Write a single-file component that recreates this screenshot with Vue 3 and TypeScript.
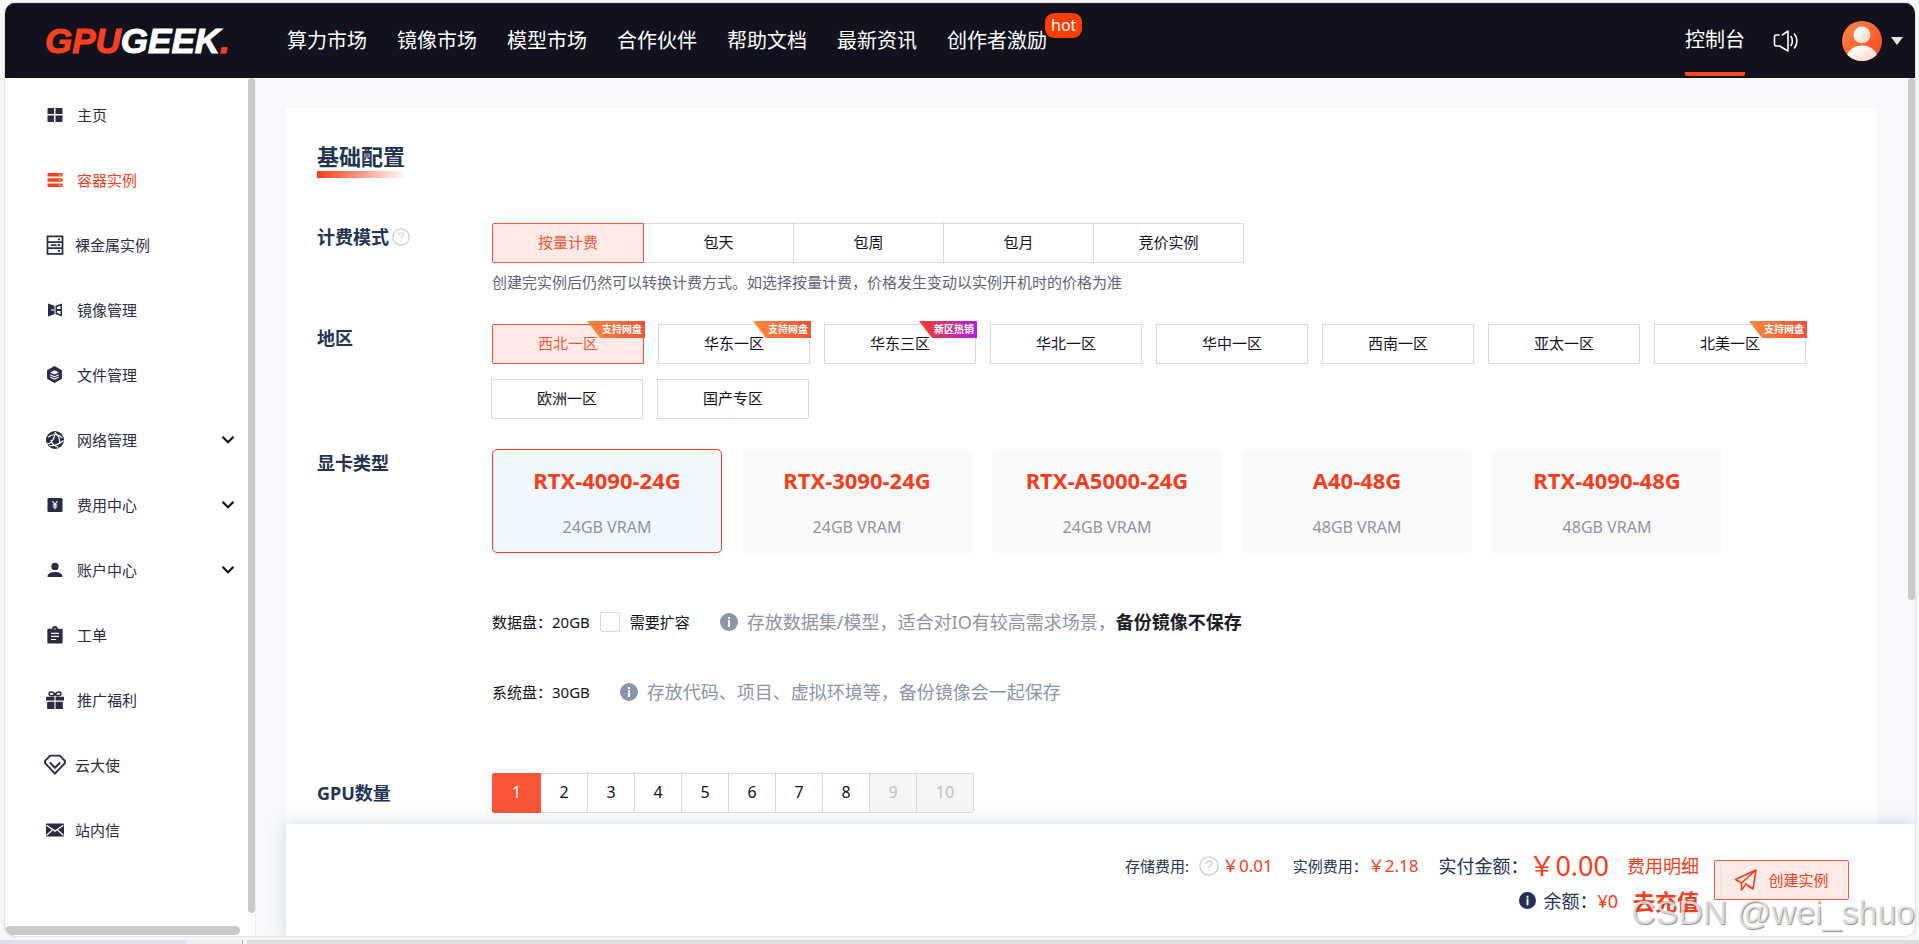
<script setup lang="ts">
import { computed, ref } from 'vue'

interface Shape {
  d: string
  kind?: 'outline' | 'cut' | 'cutline'
}
interface MenuItem {
  label: string
  icon: string
  size: number
  compact?: boolean
  expandable?: boolean
}
interface Region {
  name: string
  tag?: string
  hot?: boolean
}

const navItems = ['算力市场', '镜像市场', '模型市场', '合作伙伴', '帮助文档', '最新资讯']

const menu: MenuItem[] = [
  { label: '主页', icon: 'home', size: 16 },
  { label: '容器实例', icon: 'container', size: 16 },
  { label: '裸金属实例', icon: 'metal', size: 20, compact: true },
  { label: '镜像管理', icon: 'mirror', size: 16 },
  { label: '文件管理', icon: 'files', size: 17 },
  { label: '网络管理', icon: 'network', size: 18, expandable: true },
  { label: '费用中心', icon: 'cost', size: 16, expandable: true },
  { label: '账户中心', icon: 'account', size: 16, expandable: true },
  { label: '工单', icon: 'ticket', size: 18 },
  { label: '推广福利', icon: 'gift', size: 18 },
  { label: '云大使', icon: 'diamond', size: 22, compact: true },
  { label: '站内信', icon: 'mail', size: 18, compact: true },
]

const icons: Record<string, Shape[]> = {
  home: [
    { d: 'M1.5 1H7v6H.5V2a1 1 0 0 1 1-1zM8.5 1h6a1 1 0 0 1 1 1v5h-7zM.5 8.5H7V15H1.5a1 1 0 0 1-1-1zM8.5 8.5h7V14a1 1 0 0 1-1 1h-6z' },
  ],
  container: [
    { d: 'M.5 1h15v3.5H.5zM.5 6.2h15v3.6H.5zM.5 11.5h15V15H.5z' },
    { d: 'M12 3h1.5M12 8h1.5M12 13.2h1.5', kind: 'cutline' },
  ],
  metal: [
    { d: 'M2 1h12v14H2zM2 5.6h12M2 10.4h12M4.8 8h4.5', kind: 'outline' },
    { d: 'M10.3 7.2h1.7v1.600h-1.7zM10.3 2.7h1.7v1.4h-1.7zM10.3 12h1.7v1.4h-1.7z' },
  ],
  mirror: [
    { d: 'M1 1.500l6.500 2.300v8.400L1 14.500zM8.500 3.800L15 1.500v13l-6.500-2.300z' },
    { d: 'M10 7V4.900l3.500-1.200V7zM10 9v2.100l3.500 1.200V9z', kind: 'cut' },
    { d: 'M4 8h3.500', kind: 'cutline' },
  ],
  files: [
    { d: 'M8 0l7 4v8l-7 4-7-4V4z' },
    { d: 'M8 4l4 2-4 2-4-2z', kind: 'cut' },
    { d: 'M4 8.300l4 2 4-2M4 10.400l4 2 4-2', kind: 'cutline' },
  ],
  network: [
    { d: 'M8 0a8 8 0 1 1 0 16A8 8 0 0 1 8 0z' },
    { d: 'M0 11.500c4 .3 7-3 8.500-10.500M8.500 2c2.500 2 4 5.500 3.500 9.500M2 5.500C6 2 11 2.500 14.500 6M3 13c4.500.5 9-1.500 12.500-4.500M4.500 8c.5 3.500 3 5.500 6.500 6.500', kind: 'cutline' },
  ],
  cost: [
    { d: 'M1.500 1h13a1 1 0 0 1 1 1v12a1 1 0 0 1-1 1h-13a1 1 0 0 1-1-1V2a1 1 0 0 1 1-1z' },
    { d: 'M5.500 4L8 7.500 10.500 4M8 7.500V12.300M5.700 8h4.600M5.700 10h4.600', kind: 'cutline' },
  ],
  account: [
    { d: 'M8 .8a3.700 3.700 0 1 1 0 7.400A3.700 3.700 0 0 1 8 .8zM.5 15c0-3.500 3-5 7.500-5s7.500 1.500 7.500 5z' },
  ],
  ticket: [
    { d: 'M2 2.500h3.500a2.500 2.500 0 0 1 5 0H14a.8.8 0 0 1 .8.8v11.400a.8.8 0 0 1-.8.8H2a.8.8 0 0 1-.8-.8V3.300a.8.8 0 0 1 .8-.8z' },
    { d: 'M4.500 6.500h7M4.500 9.300h7M4.500 12h4.500M7.500 2.500h1', kind: 'cutline' },
  ],
  gift: [
    { d: 'M0 5h7.500v3.500H0zM8.500 5H16v3.500H8.500zM1 9.500h6.500V16H1zM8.500 9.500H15V16H8.500z' },
    { d: 'M8 3C6.500 4.500 2.500 4.800 2.700 2.300 3 0 6.500.5 8 3c1.500-2.500 5-3 5.300-.7C13.500 4.800 9.500 4.500 8 3z', kind: 'outline' },
  ],
  diamond: [
    { d: 'M4.500 1.200h7L15.200 5v1.700L8 14.300.8 6.700V5zM4.300 6.200L8 10l3.700-3.800', kind: 'outline' },
  ],
  mail: [
    { d: 'M1 2.200h14a1 1 0 0 1 1 1v9.600a1 1 0 0 1-1 1H1a1 1 0 0 1-1-1V3.200a1 1 0 0 1 1-1z' },
    { d: 'M.5 3.800L8 9l7.500-5.200M.5 12.700l5-4.500M15.500 12.700l-5-4.500', kind: 'cutline' },
  ],
}

const billingModes = ['按量计费', '包天', '包周', '包月', '竞价实例']
const regions: Region[] = [
  { name: '西北一区', tag: '支持网盘' },
  { name: '华东一区', tag: '支持网盘' },
  { name: '华东三区', tag: '新区热销', hot: true },
  { name: '华北一区' },
  { name: '华中一区' },
  { name: '西南一区' },
  { name: '亚太一区' },
  { name: '北美一区', tag: '支持网盘' },
  { name: '欧洲一区' },
  { name: '国产专区' },
]
const cards = [
  { model: 'RTX-4090-24G', vram: 24 },
  { model: 'RTX-3090-24G', vram: 24 },
  { model: 'RTX-A5000-24G', vram: 24 },
  { model: 'A40-48G', vram: 48 },
  { model: 'RTX-4090-48G', vram: 48 },
]
const maxGpus = 8

const activeMenu = ref('容器实例')
const billing = ref('按量计费')
const region = ref('西北一区')
const card = ref('RTX-4090-24G')
const gpuCount = ref(1)
const expandDisk = ref(false)

const storageFee = 0.01
const instanceRate = 2.18
const instanceFee = computed(() => (instanceRate * gpuCount.value).toFixed(2))
</script>

<template>
  <div class="screen" lang="zh-CN">
    <div class="window">
      <header class="topbar">
        <a class="logo" href="#"><span class="logo-a">GPU</span>GEEK<span class="logo-a">.</span></a>
        <nav class="nav">
          <a v-for="n in navItems" :key="n" href="#">{{ n }}</a>
          <a class="with-badge" href="#">创作者激励<span class="hot">hot</span></a>
        </nav>
        <a class="console" href="#">控制台</a>
        <button class="icon-btn sound" type="button" aria-label="公告">
          <svg width="26" height="24" viewBox="0 0 26 24" fill="none" stroke="#fff" stroke-width="1.600" stroke-linejoin="round" stroke-linecap="round">
            <path d="M6 6H3a1.500 1.500 0 0 0-1.500 1.500v8A1.500 1.500 0 0 0 3 17h3.500l8.500 5V2L9.500 5.800" />
            <path d="M18 7.500c1.800 2.500 1.800 6.500 0 9M21.500 5c3.200 4 3.200 10 0 14" />
          </svg>
        </button>
        <button class="icon-btn user" type="button" aria-label="用户">
          <svg width="40" height="40" viewBox="0 0 40 40">
            <defs>
              <linearGradient id="av-bg" x1="0" y1="0" x2="1" y2="1"><stop offset="0" stop-color="#ff8a45" /><stop offset="1" stop-color="#f94420" /></linearGradient>
              <linearGradient id="av-body" x1="0" y1="0" x2="1" y2="1"><stop offset=".2" stop-color="#fff" /><stop offset="1" stop-color="#fbcdb8" /></linearGradient>
              <clipPath id="av-clip"><circle cx="20" cy="20" r="20" /></clipPath>
            </defs>
            <circle cx="20" cy="20" r="20" fill="url(#av-bg)" />
            <g clip-path="url(#av-clip)" fill="url(#av-body)">
              <circle cx="20" cy="14" r="8.500" />
              <path d="M4 38c1-9 8-13.500 16-13.500S35 29 36 38v4H4z" />
            </g>
          </svg>
          <svg width="12" height="8" viewBox="0 0 12 8"><path d="M0 0h12L6 8z" fill="#e4e4e4" /></svg>
        </button>
      </header>

      <div class="body">
        <aside class="sidebar">
          <div class="side-main">
            <nav class="menu">
              <a
                v-for="m in menu"
                :key="m.label"
                href="#"
                :class="{ active: m.label === activeMenu, compact: m.compact }"
                @click.prevent="activeMenu = m.label"
              >
                <span class="slot">
                  <svg :width="m.size" :height="m.size" viewBox="0 0 16 16">
                    <path v-for="(s, i) in icons[m.icon]" :key="i" :d="s.d" :class="s.kind ?? 'solid'" />
                  </svg>
                </span>
                <span class="menu-label">{{ m.label }}</span>
                <svg v-if="m.expandable" class="chev" width="14" height="10" viewBox="0 0 14 10">
                  <path d="M1.500 1.800L7 7.300l5.500-5.500" fill="none" stroke="#12121e" stroke-width="2.200" />
                </svg>
              </a>
            </nav>
            <div class="track-v"><div class="thumb side-thumb"></div></div>
          </div>
          <div class="track-h"><div class="thumb"></div></div>
        </aside>

        <main class="main">
          <div class="scroll">
            <section class="panel">
              <h2 class="title">基础配置</h2>

              <div class="row">
                <div class="label">
                  计费模式
                  <svg class="help" width="18" height="18" viewBox="0 0 18 18"><circle cx="9" cy="9" r="8.200" /><path d="M6.600 7.200c0-3.200 4.900-3.200 4.900-.3 0 1.700-2.500 1.800-2.500 3.700M9 12.200v1.400" /></svg>
                </div>
                <div>
                  <div class="segments billing">
                    <button v-for="b in billingModes" :key="b" type="button" :class="{ on: b === billing }" @click="billing = b">{{ b }}</button>
                  </div>
                  <p class="hint">创建完实例后仍然可以转换计费方式。如选择按量计费，价格发生变动以实例开机时的价格为准</p>
                </div>
              </div>

              <div class="row">
                <div class="label">地区</div>
                <div class="segments regions">
                  <button v-for="r in regions" :key="r.name" type="button" :class="{ on: r.name === region }" @click="region = r.name">
                    {{ r.name }}
                    <span v-if="r.tag" class="tag" :class="{ hotsale: r.hot }">{{ r.tag }}</span>
                  </button>
                </div>
              </div>

              <div class="row">
                <div class="label">显卡类型</div>
                <div>
                  <div class="cards">
                    <button v-for="c in cards" :key="c.model" type="button" class="card" :class="{ on: c.model === card }" @click="card = c.model">
                      <strong>{{ c.model }}</strong>
                      <span>{{ c.vram }}GB VRAM</span>
                    </button>
                  </div>
                  <div class="disk data-disk">
                    <span>数据盘：20GB</span>
                    <label class="check"><input v-model="expandDisk" type="checkbox" />需要扩容</label>
                    <svg class="info" width="18" height="18" viewBox="0 0 18 18"><circle cx="9" cy="9" r="9" /><path d="M8 7h2v7H8zM8 4h2v2H8z" fill="#fff" /></svg>
                    <span class="note">存放数据集/模型，适合对IO有较高需求场景，<b>备份镜像不保存</b></span>
                  </div>
                  <div class="disk sys-disk">
                    <span>系统盘：30GB</span>
                    <svg class="info" width="18" height="18" viewBox="0 0 18 18"><circle cx="9" cy="9" r="9" /><path d="M8 7h2v7H8zM8 4h2v2H8z" fill="#fff" /></svg>
                    <span class="note">存放代码、项目、虚拟环境等，备份镜像会一起保存</span>
                  </div>
                </div>
              </div>

              <div class="row counts">
                <div class="label">GPU数量</div>
                <div class="segments count">
                  <button v-for="n in 10" :key="n" type="button" :disabled="n > maxGpus" :class="{ on: n === gpuCount }" @click="gpuCount = n">{{ n }}</button>
                </div>
              </div>
            </section>
            <div class="track-v"><div class="thumb main-thumb"></div></div>
          </div>

          <footer class="checkout">
            <div class="sums">
              <div class="sum-row">
                <span class="fee">存储费用:<svg class="help" width="20" height="20" viewBox="0 0 18 18"><circle cx="9" cy="9" r="8.200" /><path d="M6.600 7.200c0-3.200 4.900-3.200 4.900-.3 0 1.700-2.500 1.800-2.500 3.700M9 12.200v1.400" /></svg><em>￥{{ storageFee }}</em></span>
                <span class="fee">实例费用：<em>￥{{ instanceFee }}</em></span>
                <span class="pay">实付金额：<em>￥0.00</em></span>
                <a href="#" class="detail">费用明细</a>
              </div>
              <div class="sum-row">
                <svg class="info dark" width="17" height="17" viewBox="0 0 18 18"><circle cx="9" cy="9" r="9" /><path d="M8 7h2v7H8zM8 4h2v2H8z" fill="#fff" /></svg>
                <span class="pay">余额：<em>¥0</em></span>
                <a href="#" class="recharge">去充值</a>
              </div>
            </div>
            <button type="button" class="create">
              <svg width="24" height="24" viewBox="0 0 24 24" fill="none" stroke="#fa3c1b" stroke-width="1.600" stroke-linejoin="round"><path d="M22 2L1.500 11.500l6 3.500zM22 2L7.500 15v7l3.700-4.500M22 2l-3 19-8-5.500" /></svg>
              创建实例
            </button>
          </footer>
        </main>
      </div>
    </div>
    <div class="taskbar"><i class="seg-a"></i><i class="seg-b"></i><i class="seg-c"></i></div>
    <div class="watermark">CSDN @wei_shuo</div>
  </div>
</template>

<style>
html,
body {
  margin: 0;
  background: #f7f7f7;
}
</style>

<style scoped>
* {
  box-sizing: border-box;
}
.screen {
  position: relative;
  display: flex;
  flex-direction: column;
  height: 100vh;
  padding: 3px 4px 0 5px;
  overflow: hidden;
  background: #f7f7f7;
  color: #12121e;
  font: 15px/20px 'Noto Sans', 'Noto Sans CJK SC', sans-serif;
}
a {
  color: inherit;
  text-decoration: none;
}
button {
  font: inherit;
  color: inherit;
  cursor: pointer;
}
em {
  font-style: normal;
  color: #fa3c1b;
}
.window {
  flex: 1;
  min-height: 0;
  display: flex;
  flex-direction: column;
  border-radius: 10px;
  overflow: hidden;
  background: #fff;
  box-shadow: 0 0 2px #aaa;
}
.topbar {
  display: flex;
  align-items: center;
  height: 75px;
  flex: none;
  padding: 0 12px 0 40px;
  background: #12121e;
  border-top: 1px solid #2c2c36;
  color: #fff;
  font-size: 20px;
  line-height: 30px;
}
.logo {
  width: 242px;
  font: italic bold 35px/40px 'Liberation Sans', sans-serif;
  -webkit-text-stroke: 1px currentColor;
}
.logo-a {
  color: #fa4020;
}
.nav {
  flex: 1;
  display: flex;
  gap: 30px;
}
.with-badge {
  position: relative;
}
.hot {
  position: absolute;
  left: 100%;
  top: -13px;
  margin-left: -2px;
  padding: 0 6px;
  border-radius: 9px;
  background: #ff3d00;
  font-size: 16px;
  line-height: 25px;
}
.console {
  align-self: stretch;
  display: flex;
  align-items: center;
  padding-top: 4px;
  border-bottom: 4px solid #fb4a26;
  border-radius: 2px;
  margin-bottom: 2px;
}
.icon-btn {
  display: flex;
  align-items: center;
  gap: 9px;
  padding: 0;
  border: 0;
  background: none;
}
.sound {
  margin-left: 28px;
}
.user {
  margin-left: 43px;
}

.body {
  flex: 1;
  min-height: 0;
  display: flex;
}
.sidebar {
  display: flex;
  flex-direction: column;
  width: 251px;
  flex: none;
  border-right: 1px solid #eceef4;
}
.side-main {
  flex: 1;
  min-height: 0;
  display: flex;
}
.menu {
  flex: 1;
  padding-top: 4px;
  color: #2b2b45;
}
.menu a {
  display: flex;
  align-items: center;
  height: 65px;
  padding: 0 13px 0 38px;
}
.menu a.active {
  color: #fa4020;
}
.slot {
  display: flex;
  justify-content: center;
  width: 23px;
  margin-right: 11px;
}
.compact .slot {
  margin-right: 9px;
}
.menu-label {
  flex: 1;
}
.solid {
  fill: currentColor;
}
.outline,
.cutline {
  fill: none;
  stroke: currentColor;
  stroke-width: 1.4;
}
.cutline {
  stroke: #fff;
  stroke-width: 1.1;
}
.cut {
  fill: #fff;
}
.track-v {
  width: 7px;
  flex: none;
}
.thumb {
  border-radius: 5px;
  background: #cacaca;
}
.side-thumb {
  height: calc(100% - 7px);
}
.track-h {
  height: 10px;
  margin-top: 6px;
}
.track-h .thumb {
  width: 94%;
  height: 9px;
}

.main {
  flex: 1;
  min-width: 0;
  display: flex;
  flex-direction: column;
  background: #f8f9fd;
}
.scroll {
  flex: 1;
  min-height: 0;
  display: flex;
  overflow: hidden;
}
.scroll .panel {
  flex: 1;
  min-width: 0;
  margin: 30px 31px 0 30px;
  padding: 34px 31px;
  background: #fff;
}
.main-thumb {
  height: 70%;
}
.title {
  width: max-content;
  margin: 0 0 45px;
  padding: 0 2px 8px 0;
  color: #233354;
  font-size: 22px;
  font-weight: 700;
  line-height: 28px;
  background: linear-gradient(90deg, #fa3c1b, #fff) left bottom / 100% 7px no-repeat;
}
.row {
  display: grid;
  grid-template-columns: 175px 1fr;
  margin-bottom: 30px;
}
.label {
  display: flex;
  align-items: center;
  align-self: start;
  gap: 3px;
  height: 28px;
  color: #233354;
  font-size: 18px;
  font-weight: 700;
}
.help {
  fill: none;
  stroke: #ccced4;
  stroke-width: 1.2;
}
.hint {
  margin: 8px 0 0;
  color: #5f6379;
  line-height: 23px;
}
.segments {
  display: flex;
}
.segments button {
  position: relative;
  height: 40px;
  padding: 0 0 2px;
  border: 1px solid #d9d9d9;
  border-left: 0;
  background: #fff;
}
.segments button:first-child {
  border-left: 1px solid #d9d9d9;
  border-radius: 2px 0 0 2px;
}
.segments button:last-child {
  border-radius: 0 2px 2px 0;
}
.segments button + button::before {
  content: '';
  position: absolute;
  left: -1px;
  top: -2px;
  bottom: -1px;
  width: 1px;
  background: #d9d9d9;
}
.segments button.on {
  border: 1px solid #fa5537;
  background: #feebe8;
  color: #fa5537;
}
.segments .on + button::before {
  background: transparent;
}
.billing button {
  width: 150px;
}
.billing button:first-child,
.regions button:first-child {
  width: 152px;
}
.regions {
  flex-wrap: wrap;
  gap: 15px;
}
.regions button {
  width: 151px;
}
.segments.regions .on + button::before {
  background: #d9d9d9;
}
.tag {
  position: absolute;
  right: -2px;
  top: -4px;
  padding: 0 3px 0 15px;
  background: linear-gradient(90deg, #ff8a40, #fa5034);
  clip-path: polygon(0 0, 100% 0, 100% 100%, 13px 100%);
  color: #fff;
  font-size: 10px;
  font-weight: 700;
  line-height: 17px;
}
.hotsale {
  background: linear-gradient(90deg, #f53d24, #b41ee0);
}
.cards {
  display: flex;
  flex-wrap: wrap;
  gap: 20px;
}
.card {
  display: flex;
  flex-direction: column;
  align-items: center;
  gap: 22px;
  width: 230px;
  height: 104px;
  padding: 15px 0 0;
  border: 1px solid #f9fafc;
  border-radius: 5px;
  background: #f9fafc;
  color: #8c94a9;
  font-size: 16px;
}
.card.on {
  border-color: #fa3c1b;
  background: #f0f7ff;
}
.card strong {
  color: #fa3c1b;
  font-size: 22px;
  line-height: 30px;
}
.disk {
  display: flex;
  align-items: center;
  height: 26px;
}
.data-disk {
  margin-top: 56px;
}
.sys-disk {
  margin-top: 44px;
}
.check {
  display: flex;
  align-items: center;
  gap: 10px;
  margin-left: 10px;
}
.check input {
  appearance: none;
  width: 20px;
  height: 20px;
  margin: 0;
  border: 1px solid #d9d9d9;
  border-radius: 2px;
  background: #fff;
}
.check input:checked {
  border-color: #fa5537;
  background: #fa5537;
}
.info {
  margin: 0 9px 0 30px;
  fill: #8c94a9;
}
.note {
  color: #8c94a9;
  font-size: 18px;
}
.note b {
  color: #1c1c24;
}
.counts {
  margin-top: 68px;
}
.counts .label {
  align-self: center;
}
.count button {
  width: 47px;
  font-size: 16px;
}
.count button:first-child {
  width: 49px;
}
.count button:last-child {
  width: 57px;
}
.segments.count button.on {
  background: #fa5537;
  color: #fff;
}
.segments button:disabled {
  background: #f5f5f5;
  color: #bfbfbf;
  cursor: default;
}

.checkout {
  position: relative;
  display: flex;
  justify-content: flex-end;
  flex: none;
  gap: 15px;
  height: 112px;
  margin-left: 30px;
  padding: 24px 66px 0 0;
  background: #fff;
  box-shadow: 0 0 16px rgba(60, 90, 140, 0.25);
  color: #233354;
}
.sum-row {
  display: flex;
  align-items: center;
  justify-content: flex-end;
  height: 35px;
}
.fee {
  display: flex;
  align-items: center;
  margin-right: 20px;
}
.fee .help {
  margin: 0 3px 0 10px;
}
.fee em {
  font-size: 17px;
}
.pay,
.detail {
  font-size: 18px;
}
.pay {
  display: flex;
  align-items: center;
}
.sum-row:first-child .pay em {
  margin-right: 18px;
  font-size: 27px;
}
.detail,
.recharge {
  color: #fa3c1b;
}
.recharge {
  margin-left: 15px;
  font-size: 22px;
  font-weight: 700;
}
.info.dark {
  margin: 0 7px 0 0;
  fill: #233354;
}
.create {
  display: flex;
  align-items: center;
  justify-content: center;
  gap: 10px;
  width: 135px;
  height: 40px;
  margin-top: 12px;
  padding: 0;
  border: 1px solid #fa5537;
  border-radius: 2px;
  background: #feebe8;
  color: #fa3c1b;
}
.taskbar {
  display: flex;
  flex: none;
  height: 4px;
  margin: 4px -4px 0 -5px;
}
.seg-a {
  width: 186px;
  background: #dfe1e8;
}
.seg-b {
  width: 57px;
  border-right: 1px solid #b8b8bc;
  background: #f0f0f2;
}
.seg-c {
  flex: 1;
  margin-left: 4px;
  background: #dcdce0;
}
.watermark {
  position: absolute;
  right: 4px;
  bottom: 8px;
  color: rgba(235, 235, 235, 0.8);
  font-family: 'Liberation Sans', sans-serif;
  font-size: 34px;
  line-height: 48px;
  text-shadow: 1px 1px 1px rgba(70, 70, 70, 0.6);
  pointer-events: none;
}
</style>
